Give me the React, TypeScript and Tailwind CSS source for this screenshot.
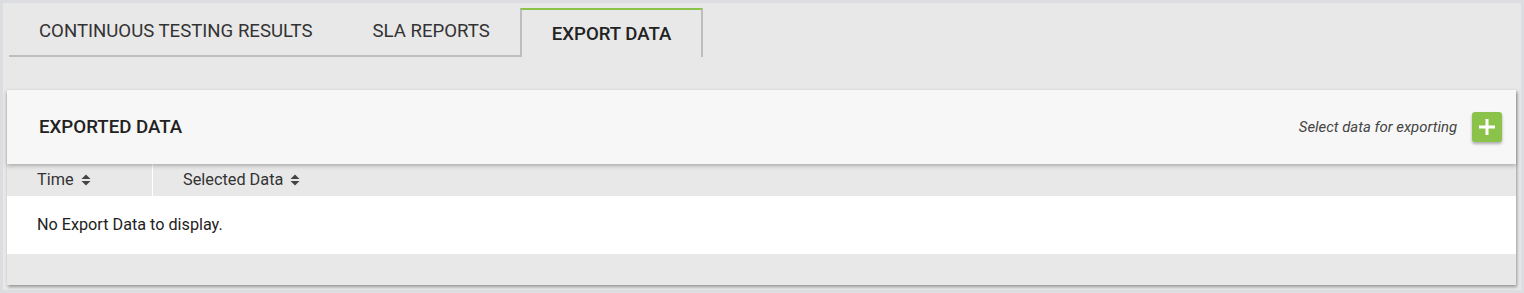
import React from 'react';

const SortIcon: React.FC = () => (
  <svg width="10" height="12" viewBox="0 0 10 12" className="ml-[7px] inline-block">
    <path d="M5 0.5 L9.5 5 L0.5 5 Z" fill="#444" />
    <path d="M0.5 7 L9.5 7 L5 11.5 Z" fill="#444" />
  </svg>
);

const tabs = ['CONTINUOUS TESTING RESULTS', 'SLA REPORTS'];

export default function App() {
  return (
    <div className="w-[1524px] h-[293px] bg-[#dcdde1] p-[3px] font-['Roboto',sans-serif]">
      <div className="h-full bg-[#e8e8e8] pt-[5px]">
        {/* Tabs */}
        <div className="flex pl-[6px]">
          {tabs.map(t => (
            <div
              key={t}
              className="h-[49px] px-[30px] pt-[10px] text-[18.6px] text-[#333] border-b-2 border-[#bdbdbd]"
            >
              {t}
            </div>
          ))}
          <div className="h-[49px] px-[30px] pt-[11px] text-[18.6px] font-medium text-[#222] border-t-2 border-x-2 border-t-[#8bc34a] border-x-[#bdbdbd] bg-[#e8e8e8]">
            EXPORT DATA
          </div>
        </div>

        {/* Card */}
        <div className="ml-[4px] mr-[5px] mt-[33px] shadow-[1px_2px_3px_rgba(0,0,0,0.35)]">
          <div className="relative z-10 h-[74px] bg-[#f7f7f7] flex items-center justify-between pl-[32px] pr-[14px] shadow-[0_2px_4px_rgba(0,0,0,0.25)]">
            <div className="text-[18.7px] font-medium text-[#222]">EXPORTED DATA</div>
            <div className="flex items-center">
              <span className="text-[14.9px] italic text-[#444]">Select data for exporting</span>
              <button className="ml-[15px] w-[30px] h-[30px] rounded-[3px] bg-[#8bc34a] flex items-center justify-center shadow-[0_2px_3px_rgba(0,0,0,0.3)]">
                <svg width="18" height="18" viewBox="0 0 18 18">
                  <path d="M9 1 V17 M1 9 H17" stroke="#fff" strokeWidth="3" />
                </svg>
              </button>
            </div>
          </div>
          <div className="flex h-[32px] bg-[#e8e8e8] text-[16.3px] text-[#333]">
            <div className="w-[146px] pl-[30px] flex items-center border-r border-white">
              Time
              <SortIcon />
            </div>
            <div className="pl-[30px] flex items-center">
              Selected Data
              <SortIcon />
            </div>
          </div>
          <div className="h-[58px] bg-white flex items-center pl-[30px] text-[16.2px] text-[#222]">
            No Export Data to display.
          </div>
          <div className="h-[31px] bg-[#e8e8e8]" />
        </div>
      </div>
    </div>
  );
}
